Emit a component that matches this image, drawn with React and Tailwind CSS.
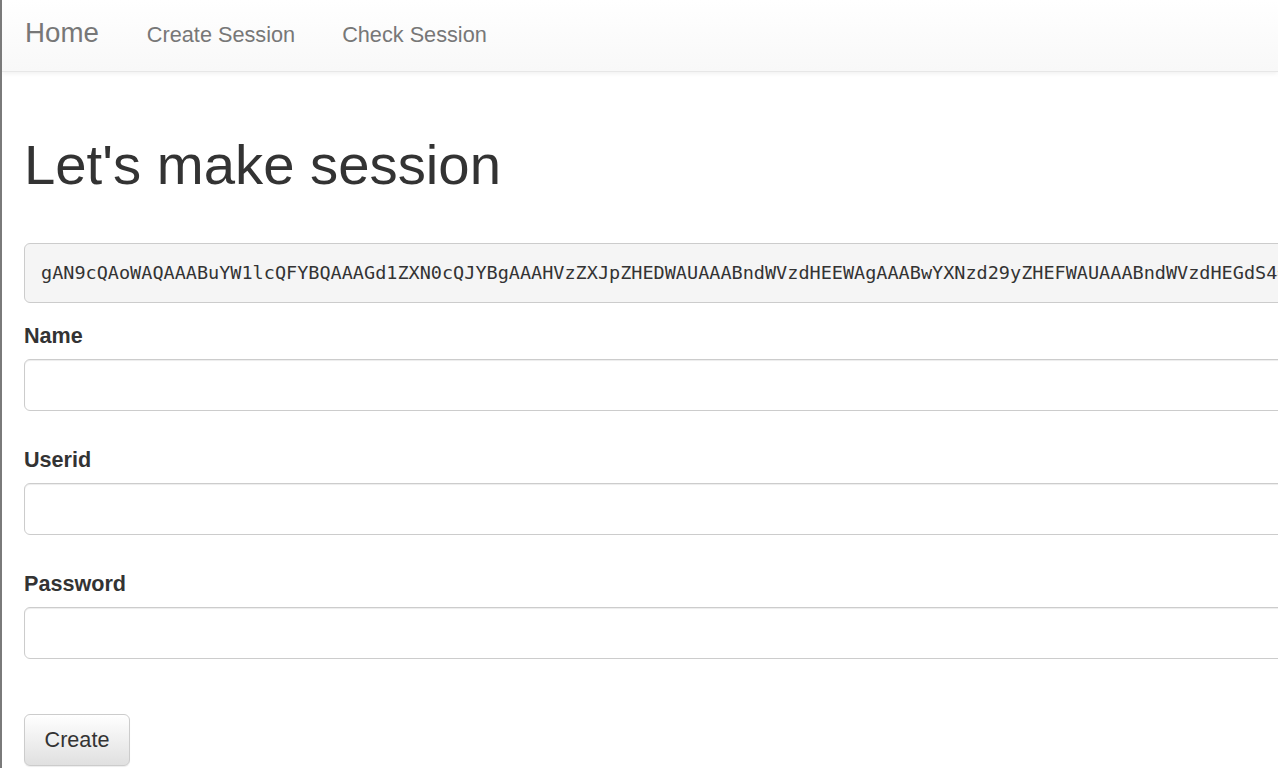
import React from 'react';

const TOKEN =
  'gAN9cQAoWAQAAABuYW1lcQFYBQAAAGd1ZXN0cQJYBgAAAHVzZXJpZHEDWAUAAABndWVzdHEEWAgAAABwYXNzd29yZHEFWAUAAABndWVzdHEGdS4=';

const Field = ({ label, type = 'text', first = false }) => (
  <div className={first ? 'mt-[18px]' : 'mt-[34px]'}>
    <label className="block text-[21.6px] leading-[30px] font-bold text-[#333]">{label}</label>
    <input
      type={type}
      className="mt-[8px] block w-full h-[52px] px-[18px] border border-[#ccc] rounded-[6px] bg-white shadow-[inset_0_1px_1px_rgba(0,0,0,0.075)] outline-none text-[21.5px] text-[#555]"
    />
  </div>
);

export default function App() {
  return (
    <div
      className="min-h-screen w-full overflow-hidden bg-white border-l-2 border-[#7a7a7a]"
      style={{ fontFamily: '"Liberation Sans", Arial, sans-serif' }}
    >
      {/* Navbar */}
      <div className="h-[72px] border-b border-[#e7e7e7] bg-gradient-to-b from-white to-[#f8f8f8] shadow-[0_1px_5px_rgba(0,0,0,0.075)]">
        <div className="flex items-baseline pt-[19px] pl-[23px]">
          <a className="text-[27.7px] leading-[28px] text-[#777]">Home</a>
          <a className="ml-[48px] text-[21.7px] leading-[28px] text-[#777]">Create Session</a>
          <a className="ml-[47px] text-[21.7px] leading-[28px] text-[#777]">Check Session</a>
        </div>
      </div>

      {/* Content */}
      <div className="w-[1700px] pl-[22px]">
        <h1 className="mt-[62px] text-[56.3px] leading-[61px] text-[#333] font-normal">Let's make session</h1>

        <pre
          className="mt-[48px] h-[60px] flex items-center px-[16px] bg-[#f5f5f5] border border-[#ccc] rounded-[6px] text-[18.5px] text-[#333] whitespace-nowrap"
          style={{ fontFamily: '"DejaVu Sans Mono", "Liberation Mono", monospace' }}
        >
          {TOKEN}
        </pre>

        <Field label="Name" first />
        <Field label="Userid" />
        <Field label="Password" type="password" />

        <button className="mt-[55px] w-[106px] h-[52px] border border-[#ccc] rounded-[6px] bg-gradient-to-b from-white to-[#e0e0e0] text-[21.6px] text-[#333] shadow-[0_1px_1px_rgba(0,0,0,0.075)]">
          Create
        </button>
      </div>
    </div>
  );
}
